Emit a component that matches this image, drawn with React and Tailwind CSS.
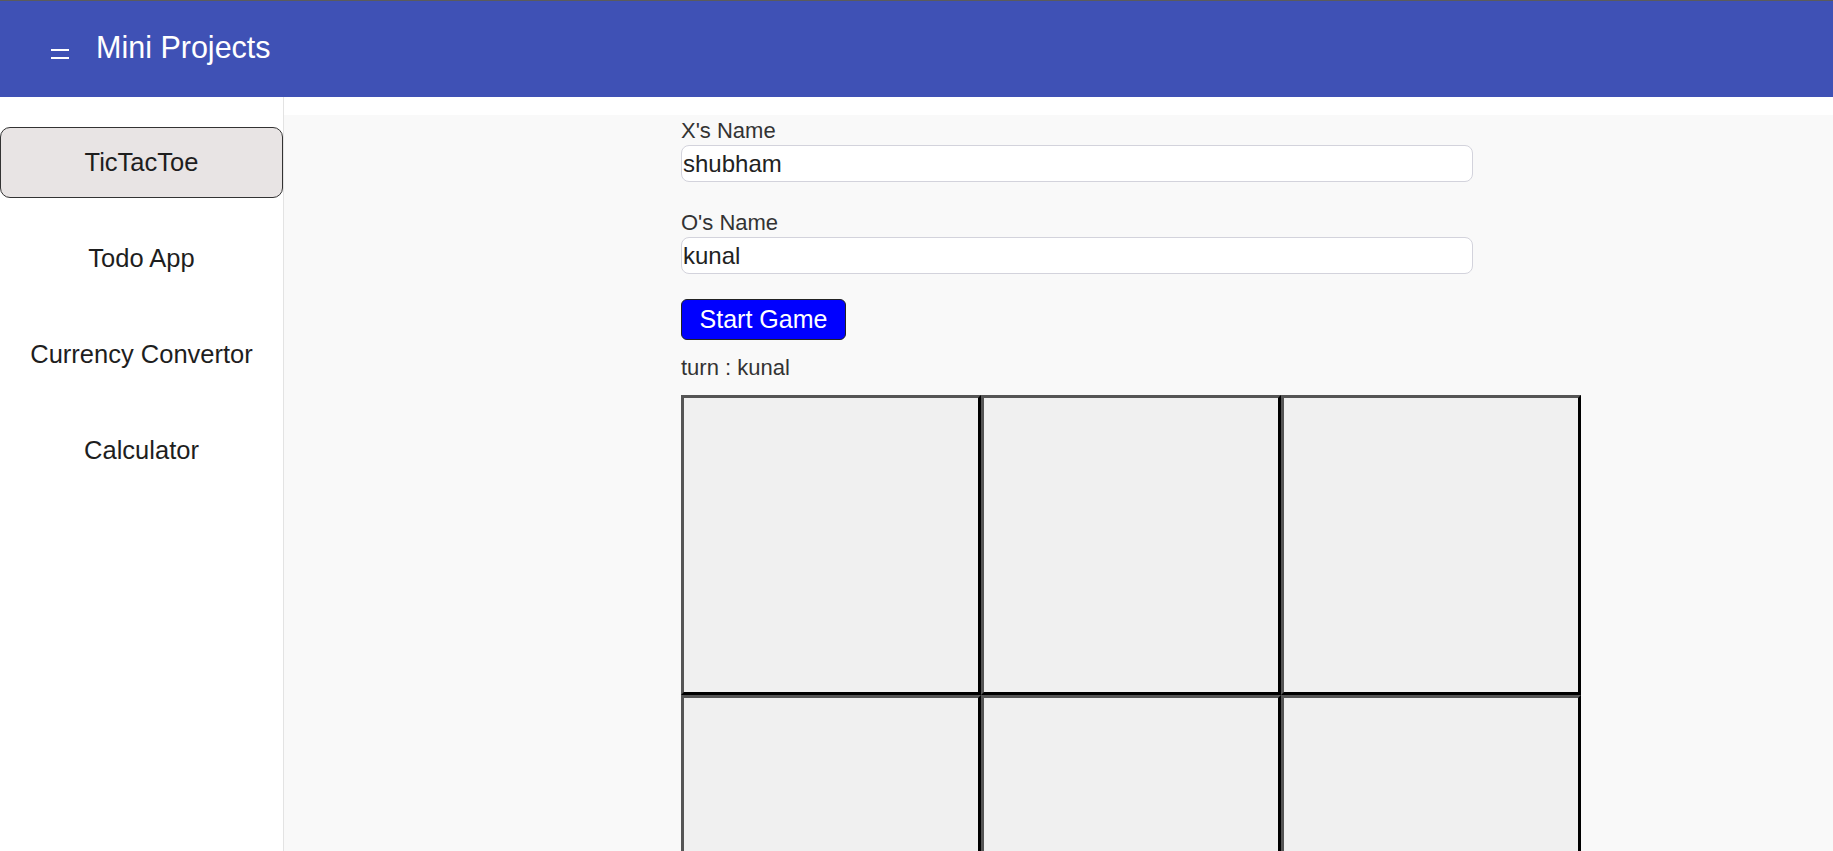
import { useState } from 'react'

const projects = ['TicTacToe', 'Todo App', 'Currency Convertor', 'Calculator']

function Cell({ value, onClick }) {
  return (
    <button
      onClick={onClick}
      className="w-[300px] h-[300px] bg-[#f0f0f0] border-[3px] border-t-[#555] border-l-[#555] border-r-black border-b-black text-[96px] text-[#222]"
    >
      {value}
    </button>
  )
}

function TicTacToe() {
  const [xName, setXName] = useState('shubham')
  const [oName, setOName] = useState('kunal')
  const [board, setBoard] = useState(Array(9).fill(''))

  return (
    <div className="flex flex-col items-start pt-[3px]">
      <label className="text-[22px] leading-[25px] text-[#333]">X's Name</label>
      <input
        value={xName}
        onChange={(e) => setXName(e.target.value)}
        className="mt-[2px] w-[792px] h-[37px] bg-white border border-[#d3d3dc] rounded-[8px] px-px text-[24px] text-[#222] outline-none"
      />

      <label className="mt-[28px] text-[22px] leading-[25px] text-[#333]">O's Name</label>
      <input
        value={oName}
        onChange={(e) => setOName(e.target.value)}
        className="mt-[2px] w-[792px] h-[37px] bg-white border border-[#d3d3dc] rounded-[8px] px-px text-[24px] text-[#222] outline-none"
      />

      <button
        onClick={() => setBoard(Array(9).fill(''))}
        className="mt-[25px] w-[165px] h-[41px] bg-[#0000ff] border border-[#222] rounded-[6px] text-white text-[25px] leading-none"
      >
        Start Game
      </button>

      <p className="mt-[15px] text-[22px] leading-[25px] text-[#333]">turn : {oName}</p>

      {/* board */}
      <div className="mt-[15px] grid grid-cols-3 w-[900px]">
        {board.map((v, i) => (
          <Cell key={i} value={v} onClick={() => {}} />
        ))}
      </div>
    </div>
  )
}

export default function App() {
  const [active, setActive] = useState('TicTacToe')

  return (
    <div className="min-h-screen bg-white font-['Liberation_Sans',Arial,sans-serif]">
      {/* Barra superior */}
      <header className="h-[97px] bg-[#3f51b5] border-t border-[#5b5b5b] flex items-center pl-[51px] text-white">
        <div className="mt-[10px] w-[18px] flex flex-col gap-[6px]">
          <span className="h-[2px] bg-white" />
          <span className="h-[2px] bg-white" />
        </div>
        <h1 className="ml-[27px] -mt-[2px] text-[30.5px] font-normal">Mini Projects</h1>
      </header>

      <div className="flex min-h-[calc(100vh-97px)]">
        <aside className="w-[284px] shrink-0 border-r border-[#e3e3e3] pt-[30px] flex flex-col gap-[25px]">
          {projects.map((p) => (
            <button
              key={p}
              onClick={() => setActive(p)}
              className={`h-[71px] flex items-center justify-center text-[25.5px] text-[#1e1e1e] rounded-[10px] border ${
                active === p ? 'bg-[#e8e4e4] border-[#333]' : 'border-transparent'
              }`}
            >
              {p}
            </button>
          ))}
        </aside>

        <main className="flex-1 mt-[18px] bg-[#f9f9f9] pl-[397px] pb-10">
          {active === 'TicTacToe' && <TicTacToe />}
        </main>
      </div>
    </div>
  )
}
